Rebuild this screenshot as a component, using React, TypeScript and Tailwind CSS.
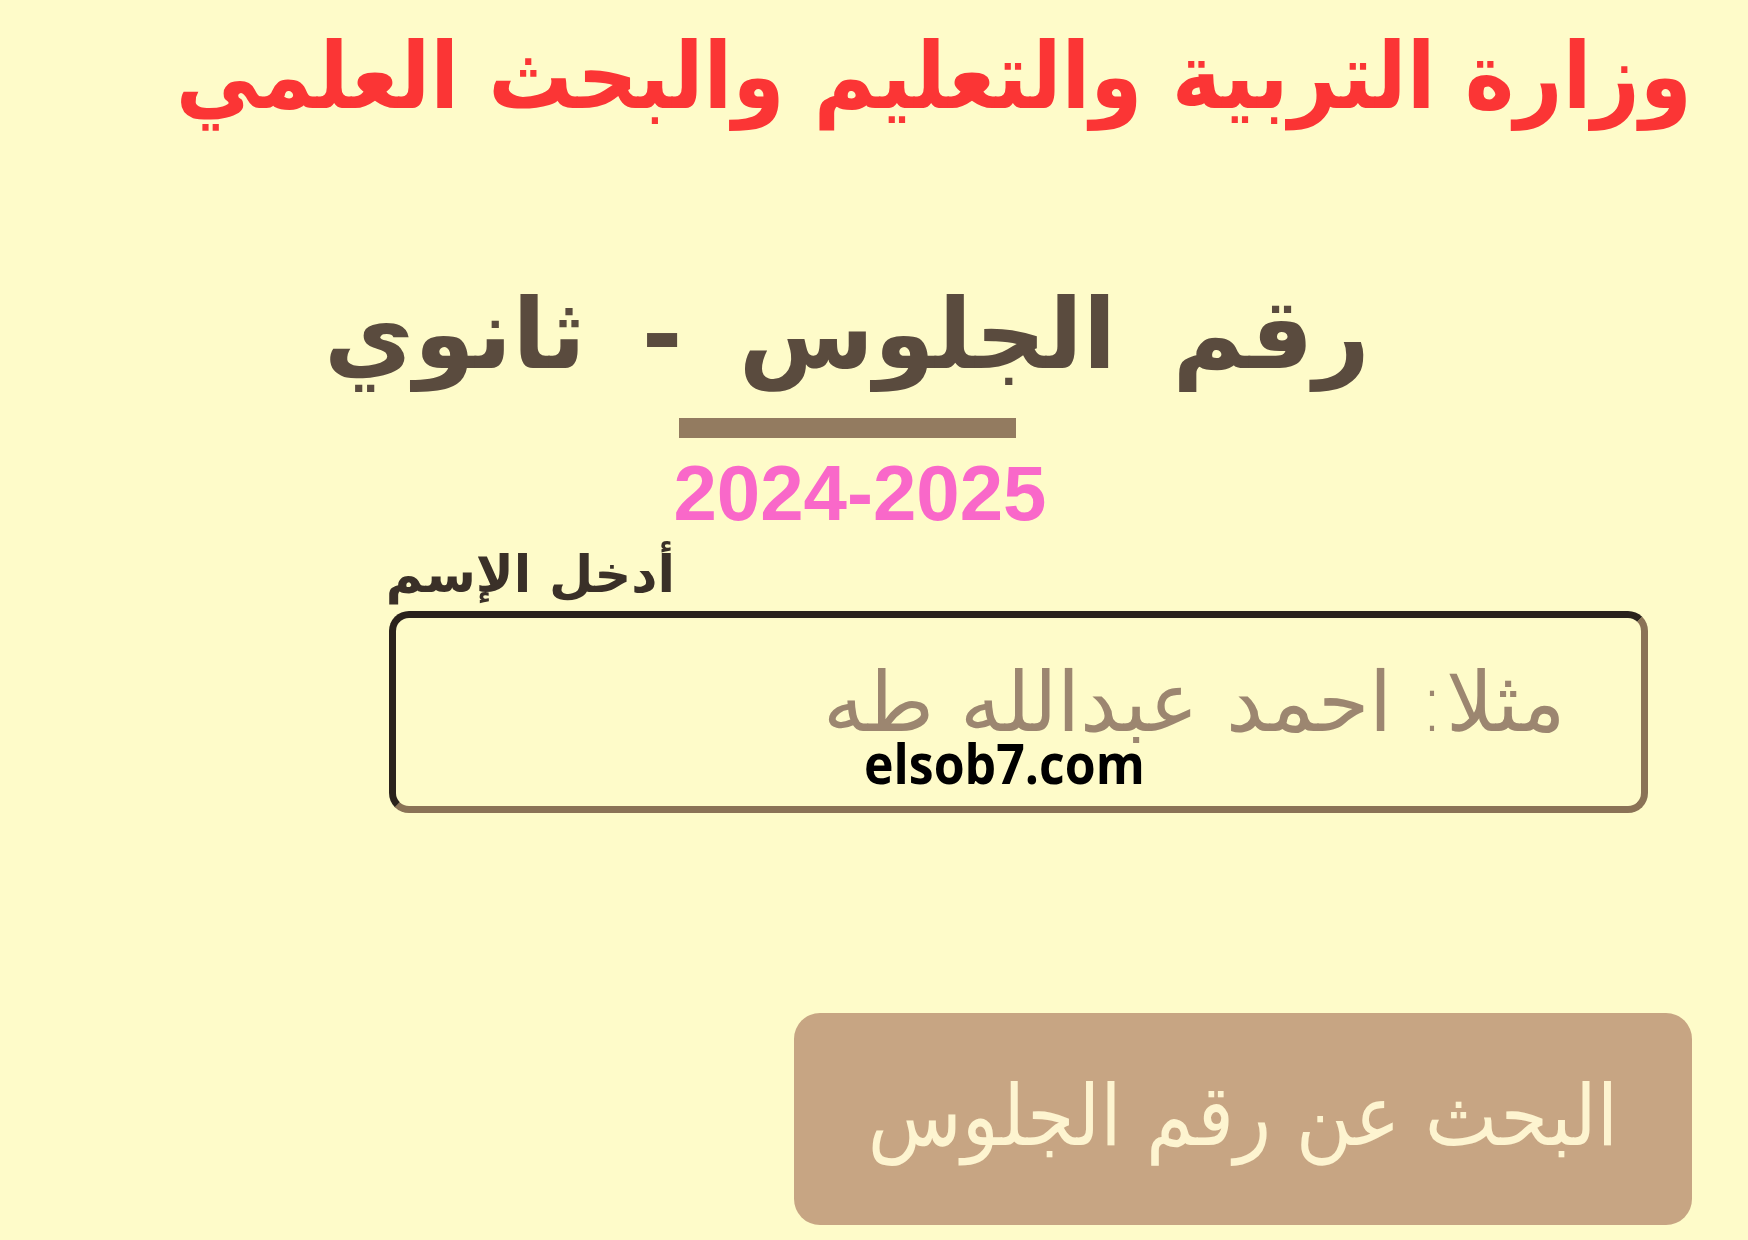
import React from "react";

export default function App() {
  return (
    <div className="w-[1748px] h-[1240px] bg-[#fefbc9] overflow-hidden relative" style={{ fontFamily: '"DejaVu Sans", sans-serif' }}>
      <div dir="rtl" className="pr-[56px] pt-[16px] h-[150px] text-right">
        <h1 className="text-[#fb3535] font-bold text-[84px] leading-[120px] scale-y-110 [font-family:'DejaVu_Sans',sans-serif]">
          وزارة التربية والتعليم والبحث العلمي
        </h1>
      </div>

      <div className="ml-[332px] w-[1030px] mt-[124px] flex flex-col items-center">
        <h2 dir="rtl" className="text-[#5a4b3e] font-bold text-[98px] leading-[120px] [word-spacing:22px] whitespace-nowrap">
          رقم الجلوس - ثانوي
        </h2>
        <div className="mt-[24px] w-[337px] h-[20px] bg-[#937b60]" />
        <div className="mt-[15px] pl-[26px] text-[#f968c9] font-bold text-[78px] leading-[80px] [font-family:'Liberation_Sans',Arial,sans-serif]">
          2024-2025
        </div>
      </div>

      <div className="ml-[389px] w-[1259px] mt-[8px]">
        <div dir="rtl" className="w-[286px] text-right whitespace-nowrap text-[#3a3028] font-bold text-[51px] leading-[68px]">
          أدخل الإسم
        </div>
        <div className="relative mt-[2px] h-[202px] rounded-[20px] border-[7px] border-t-[#2a221c] border-l-[#2a221c] border-r-[#8a7256] border-b-[#8a7256] flex items-center justify-end pr-[76px]">
          <span dir="rtl" className="text-[#9c8670] text-[83px] leading-[80px] font-extralight -mt-[18px]">
            مثلا: احمد عبدالله طه
          </span>
          <span className="absolute left-[468px] top-[120px] text-black font-bold text-[50px] leading-[50px] scale-y-110 [font-family:'Open_Sans',sans-serif]">
            elsob7.com
          </span>
        </div>
      </div>

      <div className="ml-[794px] mt-[200px] w-[898px] h-[212px] rounded-[26px] bg-[#c7a583] flex items-center justify-center">
        <span dir="rtl" className="text-[#fdf4d0] text-[77px] leading-[100px] scale-y-110 -mt-[6px]">
          البحث عن رقم الجلوس
        </span>
      </div>
    </div>
  );
}
